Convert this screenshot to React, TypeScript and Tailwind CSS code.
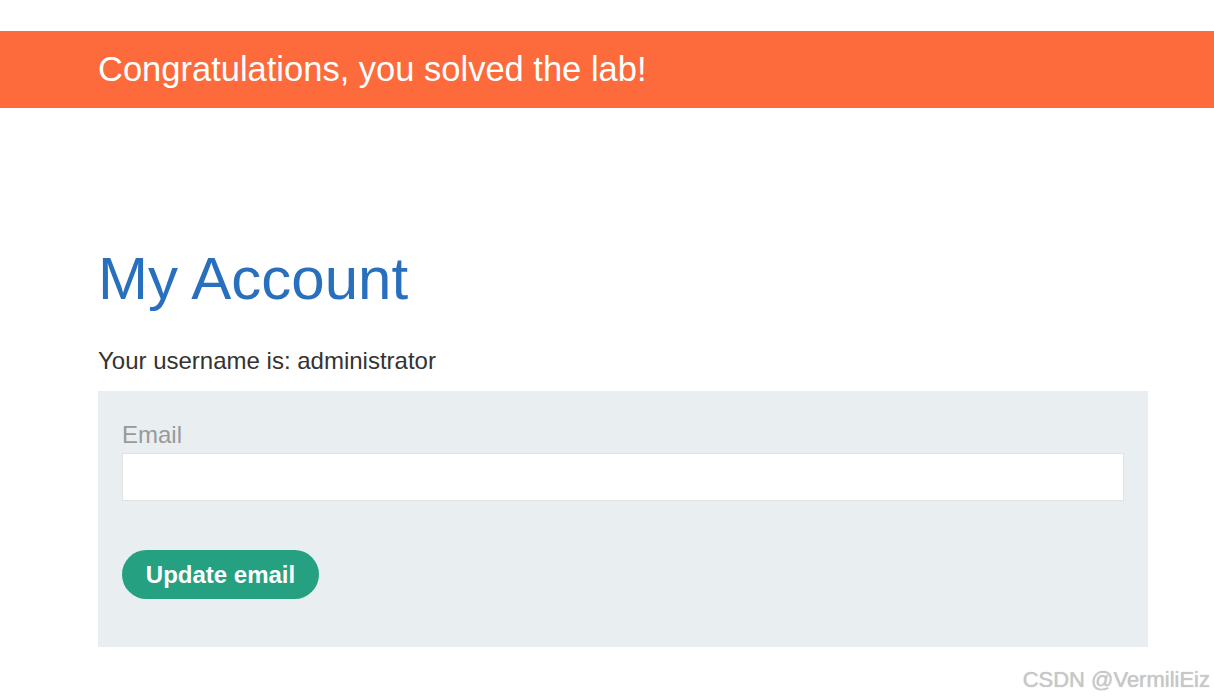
export default function App() {
  return (
    <div
      className="relative h-[698px] w-[1214px] overflow-hidden bg-white text-[#333]"
      style={{ fontFamily: '"Liberation Sans", Arial, sans-serif' }}
    >
      <div className="h-[31px]" />
      <div className="flex h-[77px] items-center bg-[#fd6a3b] pl-[98px]">
        <h4 className="text-[34.5px] leading-none text-white">Congratulations, you solved the lab!</h4>
      </div>

      <div className="px-[98px] pt-[141px]">
        <h1 className="text-[60px] leading-none text-[#2870bd]">My Account</h1>
        <p className="mt-[40px] text-[24px] leading-none">Your username is: administrator</p>

        <form className="mt-[18px] h-[256px] w-[1050px] bg-[#e9eef1] px-6 pt-[32px]">
          <label className="block text-[24px] leading-none text-[#999]">Email</label>
          <input
            type="text"
            className="mt-[6px] block h-[48px] w-full border border-[#e2e2e2] bg-white outline-none"
          />
          <button
            type="button"
            className="mt-[49px] h-[49px] w-[197px] rounded-full bg-[#25a182] text-[24px] font-bold text-white"
          >
            Update email
          </button>
        </form>
      </div>

      <div className="absolute right-[4px] top-[663px] text-[22px] text-[#c8c8c8] [text-shadow:0_0_1px_#bbb]">
        CSDN @VermiliEiz
      </div>
    </div>
  );
}
